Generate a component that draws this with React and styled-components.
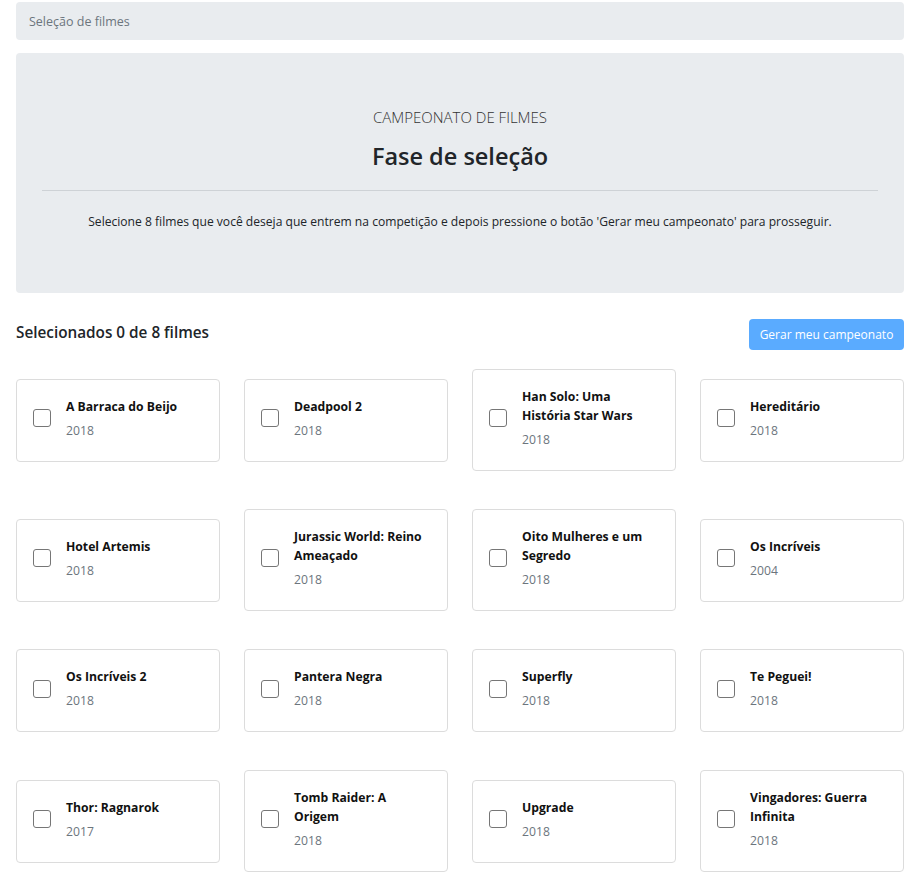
import React from 'react';
import styled, { createGlobalStyle } from 'styled-components';

const GlobalStyle = createGlobalStyle`
    body {
        margin: 0;
        background: #fff;
        font-family: 'Open Sans', 'Noto Sans', sans-serif;
        font-size: 13px;
        color: #212529;
    }
    * { box-sizing: border-box; }
`

/** styled components */
const Container = styled.div`
    padding: 2px 19px 20px 16px;
`
const Breadcrumb = styled.nav`
    height: 38px;
    display: flex;
    align-items: center;
    padding: 0 13px;
    background-color: #e9ecef;
    border-radius: 4px;
    color: #6c757d;
    font-size: 12.5px;
`
const Jumbotron = styled.section`
    margin-top: 13px;
    height: 240px;
    padding: 53px 26px 0;
    background-color: #e9ecef;
    border-radius: 4px;
    text-align: center;
`
const Lead = styled.p`
    margin: 0;
    font-size: 15px;
    font-weight: 300;
    line-height: 22px;
    color: #333;
`
const Title = styled.h1`
    margin: 13px 0 0;
    font-size: 23.5px;
    font-weight: 600;
    line-height: 30px;
`
const Hr = styled.hr`
    margin: 19px 0 0;
    border: none;
    border-top: 1px solid #ced2d6;
`
const Text = styled.p`
    margin: 22px 0 0;
    font-size: 12.1px;
    line-height: 18px;
`
const Top = styled.div`
    display: flex;
    align-items: center;
    justify-content: space-between;
    margin-top: 26px;
`
const Counter = styled.h5`
    margin: 0 0 6px;
    font-size: 15.3px;
    font-weight: 600;
    color: #212529;
`
const Button = styled.button`
    width: 155px;
    height: 31px;
    padding: 0;
    border: none;
    border-radius: 4px;
    background-color: #5aabff;
    color: #fff;
    font-family: inherit;
    font-size: 12px;
    cursor: default;
`
const Grid = styled.div`
    display: grid;
    grid-template-columns: repeat(4, 1fr);
    column-gap: 24px;
    row-gap: 38px;
    align-items: center;
    margin-top: 19px;
`
const Card = styled.label`
    display: flex;
    align-items: center;
    gap: 15px;
    padding: 17px 16px 21px;
    border: 1px solid #dcdcdc;
    border-radius: 4px;
    background: #fff;
`
const Check = styled.span`
    flex: none;
    width: 18px;
    height: 18px;
    border: 1px solid #767676;
    border-radius: 3px;
    background: #fff;
`
const Info = styled.div`
    display: flex;
    flex-direction: column;
`
const MovieTitle = styled.span`
    font-size: 12.2px;
    font-weight: 700;
    line-height: 19px;
    color: #111;
`
const Year = styled.span`
    margin-top: 5px;
    font-size: 12.2px;
    line-height: 19px;
    color: #6c757d;
`

const movies = [
    { title: 'A Barraca do Beijo', year: 2018 },
    { title: 'Deadpool 2', year: 2018 },
    { title: 'Han Solo: Uma História Star Wars', year: 2018 },
    { title: 'Hereditário', year: 2018 },
    { title: 'Hotel Artemis', year: 2018 },
    { title: 'Jurassic World: Reino Ameaçado', year: 2018 },
    { title: 'Oito Mulheres e um Segredo', year: 2018 },
    { title: 'Os Incríveis', year: 2004 },
    { title: 'Os Incríveis 2', year: 2018 },
    { title: 'Pantera Negra', year: 2018 },
    { title: 'Superfly', year: 2018 },
    { title: 'Te Peguei!', year: 2018 },
    { title: 'Thor: Ragnarok', year: 2017 },
    { title: 'Tomb Raider: A Origem', year: 2018 },
    { title: 'Upgrade', year: 2018 },
    { title: 'Vingadores: Guerra Infinita', year: 2018 },
];

const App = () => {
    return (
        <Container>
            <GlobalStyle />
            <Breadcrumb>Seleção de filmes</Breadcrumb>
            <Jumbotron>
                <Lead>CAMPEONATO DE FILMES</Lead>
                <Title>Fase de seleção</Title>
                <Hr />
                <Text>
                    Selecione 8 filmes que você deseja que entrem na competição e depois pressione o botão 'Gerar meu campeonato' para prosseguir.
                </Text>
            </Jumbotron>
            <Top>
                <Counter>Selecionados 0 de 8 filmes</Counter>
                <Button disabled>Gerar meu campeonato</Button>
            </Top>
            <Grid>
                {movies.map((movie) => (
                    <Card key={movie.title}>
                        <Check />
                        <Info>
                            <MovieTitle>{movie.title}</MovieTitle>
                            <Year>{movie.year}</Year>
                        </Info>
                    </Card>
                ))}
            </Grid>
        </Container>
    )
}

export default App;
